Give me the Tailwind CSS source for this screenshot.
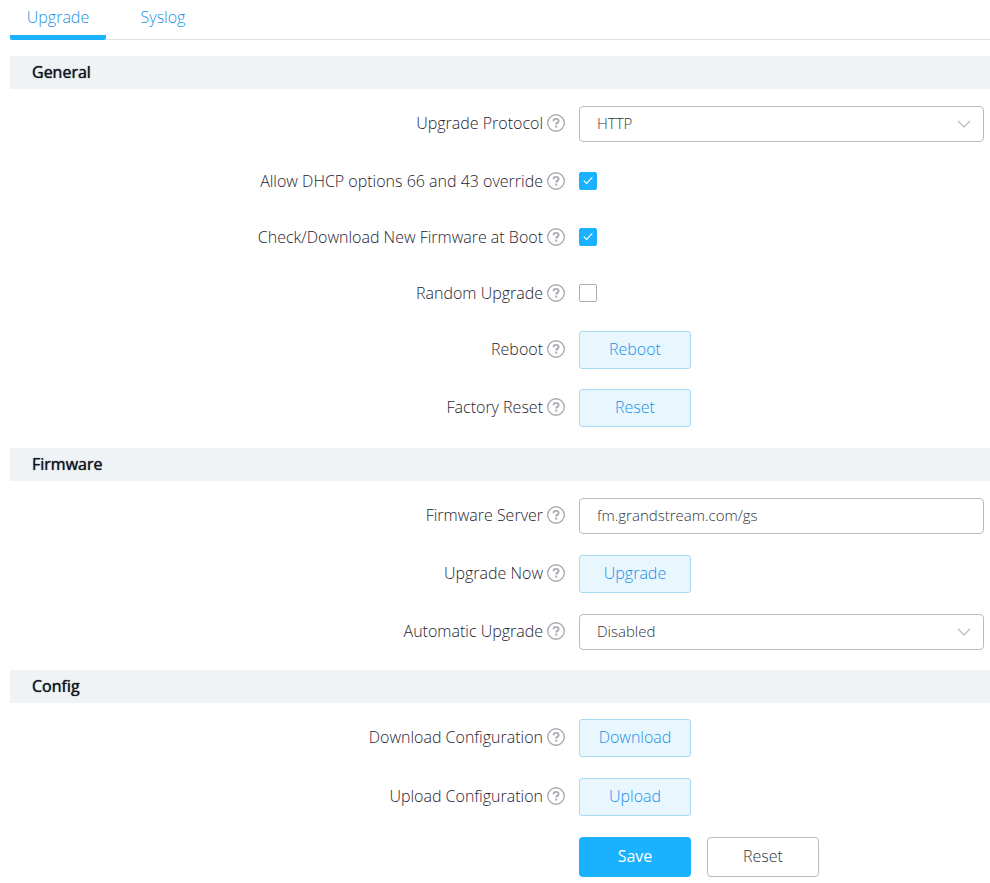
<!DOCTYPE html>
<html lang="en">
<head>
<meta charset="utf-8">
<meta name="viewport" content="width=device-width, initial-scale=1">
<title>Upgrade</title>
<script src="https://cdn.jsdelivr.net/npm/@tailwindcss/browser@4"></script>
</head>
<body class="bg-white font-['Open_Sans',sans-serif] text-base font-light text-[#1f2430]">
<svg class="hidden" aria-hidden="true">
  <symbol id="help" viewBox="0 0 18 18">
    <circle cx="9" cy="9" r="8.3" fill="none" stroke="currentColor" stroke-width="1.4"/>
    <path d="M6.5 7.3c0-1.5 1.1-2.4 2.6-2.4s2.5.9 2.5 2.1c0 1.6-2.4 1.7-2.4 3.6" fill="none" stroke="currentColor" stroke-width="1.9"/>
    <rect x="8.2" y="11.6" width="2" height="2" fill="currentColor"/>
  </symbol>
  <symbol id="chevron" viewBox="0 0 14 8">
    <path d="M1 1l6 6 6-6" fill="none" stroke="currentColor" stroke-width="1.2"/>
  </symbol>
  <symbol id="check" viewBox="0 0 18 18">
    <path d="M4.7 8.7l2.9 2.7 5.7-6" fill="none" stroke="currentColor" stroke-width="1.1"/>
  </symbol>
</svg>
<main class="pl-[10px] pb-[7px]">
  <nav class="flex h-10 gap-[17px] border-b border-[#dfe1e4] leading-[34px] text-[#1b90e6]">
    <a href="#upgrade" aria-current="page" class="-mb-px w-24 rounded-xs border-b-5 border-[#1ab2ff] text-center">Upgrade</a>
    <a href="#syslog" class="w-20 text-center">Syslog</a>
  </nav>
  <form>
    <section class="mt-4">
      <h2 class="flex h-[33px] items-center bg-[#f0f3f6] pb-px pl-[22px] font-normal text-[#10141f] [text-shadow:0_0_1px_currentColor]">General</h2>
      <div class="mt-[17px] grid gap-5 pr-[6px]">
        <div class="grid min-h-[37px] grid-cols-[555fr_405fr] items-start gap-x-[14px]">
          <div class="flex h-[34px] items-center justify-end gap-1"><label for="protocol">Upgrade Protocol</label><button type="button" aria-label="Help: Upgrade Protocol" class="text-[#a9acb3]"><svg class="size-[18px]"><use href="#help"/></svg></button></div>
          <div class="relative"><select id="protocol" class="h-9 w-full appearance-none rounded-sm border border-[#b7bac0] bg-white px-[17px] pb-0.5 text-[15px] text-[#30343d]"><option>HTTP</option></select><svg class="pointer-events-none absolute top-[14px] right-[13px] h-2 w-[14px] text-[#b7bac0]"><use href="#chevron"/></svg></div>
        </div>
        <div class="grid min-h-9 grid-cols-[555fr_405fr] items-center gap-x-[14px]">
          <div class="flex items-center justify-end gap-1"><label for="dhcp">Allow DHCP options 66 and 43 override</label><button type="button" aria-label="Help: DHCP override" class="text-[#a9acb3]"><svg class="size-[18px]"><use href="#help"/></svg></button></div>
          <div class="relative size-[18px]"><input id="dhcp" type="checkbox" checked class="peer block size-[18px] appearance-none rounded-xs border border-[#a9acb3] checked:border-[#1ab2ff] checked:bg-[#1ab2ff]"><svg class="pointer-events-none absolute inset-0 hidden size-[18px] text-white peer-checked:block"><use href="#check"/></svg></div>
        </div>
        <div class="grid min-h-9 grid-cols-[555fr_405fr] items-center gap-x-[14px]">
          <div class="flex items-center justify-end gap-1"><label for="boot">Check/Download New Firmware at Boot</label><button type="button" aria-label="Help: Firmware at Boot" class="text-[#a9acb3]"><svg class="size-[18px]"><use href="#help"/></svg></button></div>
          <div class="relative size-[18px]"><input id="boot" type="checkbox" checked class="peer block size-[18px] appearance-none rounded-xs border border-[#a9acb3] checked:border-[#1ab2ff] checked:bg-[#1ab2ff]"><svg class="pointer-events-none absolute inset-0 hidden size-[18px] text-white peer-checked:block"><use href="#check"/></svg></div>
        </div>
        <div class="grid min-h-9 grid-cols-[555fr_405fr] items-center gap-x-[14px]">
          <div class="flex items-center justify-end gap-1"><label for="random">Random Upgrade</label><button type="button" aria-label="Help: Random Upgrade" class="text-[#a9acb3]"><svg class="size-[18px]"><use href="#help"/></svg></button></div>
          <div class="relative size-[18px]"><input id="random" type="checkbox" class="peer block size-[18px] appearance-none rounded-xs border border-[#a9acb3] checked:border-[#1ab2ff] checked:bg-[#1ab2ff]"><svg class="pointer-events-none absolute inset-0 hidden size-[18px] text-white peer-checked:block"><use href="#check"/></svg></div>
        </div>
        <div class="grid grid-cols-[555fr_405fr] items-start gap-x-[14px]">
          <div class="flex h-9 items-center justify-end gap-1"><label for="reboot">Reboot</label><button type="button" aria-label="Help: Reboot" class="text-[#a9acb3]"><svg class="size-[18px]"><use href="#help"/></svg></button></div>
          <button id="reboot" type="button" class="h-[38px] w-28 rounded-[3px] border border-[#a9d9f5] bg-[#e8f6fe] pb-0.5 text-[#1b90e6]">Reboot</button>
        </div>
        <div class="grid grid-cols-[555fr_405fr] items-start gap-x-[14px]">
          <div class="flex h-9 items-center justify-end gap-1"><label for="factory">Factory Reset</label><button type="button" aria-label="Help: Factory Reset" class="text-[#a9acb3]"><svg class="size-[18px]"><use href="#help"/></svg></button></div>
          <button id="factory" type="button" class="h-[38px] w-28 rounded-[3px] border border-[#a9d9f5] bg-[#e8f6fe] pb-0.5 text-[#1b90e6]">Reset</button>
        </div>
      </div>
    </section>
    <section class="mt-[21px]">
      <h2 class="flex h-[33px] items-center bg-[#f0f3f6] pb-px pl-[22px] font-normal text-[#10141f] [text-shadow:0_0_1px_currentColor]">Firmware</h2>
      <div class="mt-[17px] grid gap-[21px] pr-[6px]">
        <div class="grid grid-cols-[555fr_405fr] items-start gap-x-[14px]">
          <div class="flex h-[34px] items-center justify-end gap-1"><label for="server">Firmware Server</label><button type="button" aria-label="Help: Firmware Server" class="text-[#a9acb3]"><svg class="size-[18px]"><use href="#help"/></svg></button></div>
          <input id="server" type="text" value="fm.grandstream.com/gs" class="h-9 w-full rounded-sm border border-[#b7bac0] bg-white px-[17px] pb-0.5 text-[15px] text-[#30343d]">
        </div>
        <div class="grid grid-cols-[555fr_405fr] items-start gap-x-[14px]">
          <div class="flex h-9 items-center justify-end gap-1"><label for="now">Upgrade Now</label><button type="button" aria-label="Help: Upgrade Now" class="text-[#a9acb3]"><svg class="size-[18px]"><use href="#help"/></svg></button></div>
          <button id="now" type="button" class="h-[38px] w-28 rounded-[3px] border border-[#a9d9f5] bg-[#e8f6fe] pb-0.5 text-[#1b90e6]">Upgrade</button>
        </div>
        <div class="grid grid-cols-[555fr_405fr] items-start gap-x-[14px]">
          <div class="flex h-[34px] items-center justify-end gap-1"><label for="auto">Automatic Upgrade</label><button type="button" aria-label="Help: Automatic Upgrade" class="text-[#a9acb3]"><svg class="size-[18px]"><use href="#help"/></svg></button></div>
          <div class="relative"><select id="auto" class="h-9 w-full appearance-none rounded-sm border border-[#b7bac0] bg-white px-[17px] pb-0.5 text-[15px] text-[#30343d]"><option>Disabled</option></select><svg class="pointer-events-none absolute top-[14px] right-[13px] h-2 w-[14px] text-[#b7bac0]"><use href="#chevron"/></svg></div>
        </div>
      </div>
    </section>
    <section class="mt-5">
      <h2 class="flex h-[33px] items-center bg-[#f0f3f6] pb-px pl-[22px] font-normal text-[#10141f] [text-shadow:0_0_1px_currentColor]">Config</h2>
      <div class="mt-4 grid gap-[21px] pr-[6px]">
        <div class="grid grid-cols-[555fr_405fr] items-start gap-x-[14px]">
          <div class="flex h-9 items-center justify-end gap-1"><label for="download">Download Configuration</label><button type="button" aria-label="Help: Download Configuration" class="text-[#a9acb3]"><svg class="size-[18px]"><use href="#help"/></svg></button></div>
          <button id="download" type="button" class="h-[38px] w-28 rounded-[3px] border border-[#a9d9f5] bg-[#e8f6fe] pb-0.5 text-[#1b90e6]">Download</button>
        </div>
        <div class="grid grid-cols-[555fr_405fr] items-start gap-x-[14px]">
          <div class="flex h-9 items-center justify-end gap-1"><label for="upload">Upload Configuration</label><button type="button" aria-label="Help: Upload Configuration" class="text-[#a9acb3]"><svg class="size-[18px]"><use href="#help"/></svg></button></div>
          <button id="upload" type="button" class="h-[38px] w-28 rounded-[3px] border border-[#a9d9f5] bg-[#e8f6fe] pb-0.5 text-[#1b90e6]">Upload</button>
        </div>
        <div class="grid grid-cols-[555fr_405fr] gap-x-[14px]">
          <div class="col-start-2 flex gap-4">
            <button type="submit" class="h-10 w-28 rounded-sm bg-[#1ab2ff] pb-0.5 font-normal text-white">Save</button>
            <button type="reset" class="h-10 w-28 rounded-sm border border-[#b7bac0] bg-white pb-0.5 text-[#30343d]">Reset</button>
          </div>
        </div>
      </div>
    </section>
  </form>
</main>
</body>
</html>
